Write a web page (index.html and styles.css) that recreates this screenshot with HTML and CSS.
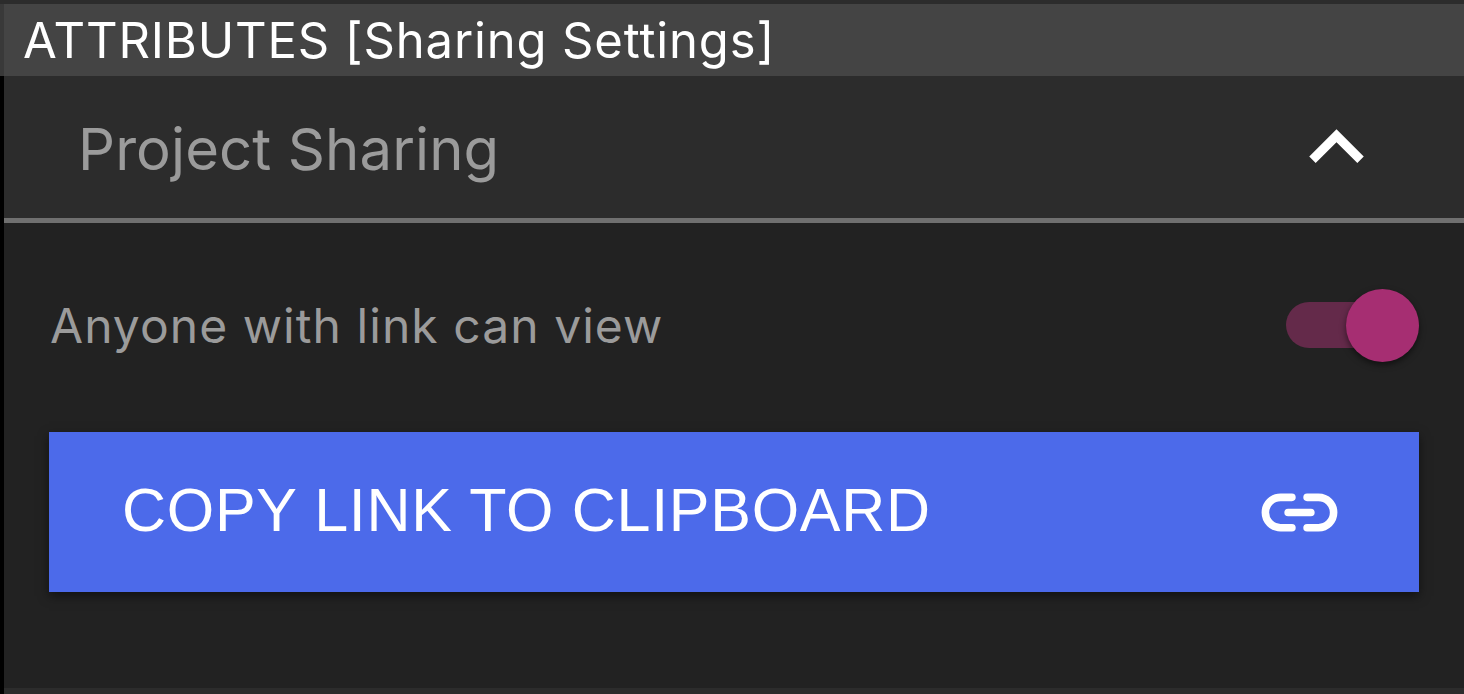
FILE: index.html
```
<!DOCTYPE html>
<html lang="en">
<head>
  <meta charset="utf-8">
  <title>Sharing Settings</title>
  <link rel="stylesheet" href="styles.css">
</head>
<body>
  <div class="panel">
    <div class="panel-title"><span class="title-text">ATTRIBUTES [Sharing Settings]</span></div>
    <div class="section">
      <div class="section-header">
        <span class="section-text">Project Sharing</span>
        <svg class="chevron" viewBox="0 0 24 24"><path d="M12 8l-6 6 1.41 1.41L12 10.83l4.59 4.58L18 14z"/></svg>
      </div>
      <div class="section-body">
        <div class="option">
          <span class="option-text">Anyone with link can view</span>
          <div class="switch"><div class="switch-knob"></div></div>
        </div>
        <button class="copy-button" type="button">
          <span class="copy-text">COPY LINK TO CLIPBOARD</span>
          <svg class="link-icon" viewBox="0 0 24 24">
            <path d="M10 8H7a4 4 0 0 0 0 8h3M14 8h3a4 4 0 0 1 0 8h-3M9 12h6"/>
          </svg>
        </button>
      </div>
    </div>
  </div>
</body>
</html>
```

FILE: styles.css
```
* {
  box-sizing: border-box;
}
body {
  margin: 0;
  background-color: #2c2c2c;
  font-family: Inter, "Liberation Sans", sans-serif;
  overflow: hidden;
}
span {
  white-space: nowrap;
}
.panel {
  height: 694px;
  padding-top: 4px;
}

/* title bar */
.panel-title {
  height: 72px;
  padding-left: 19px;
  border-left: 4px solid #393939;
  background-color: #444444;
  color: #ffffff;
  font-size: 49px;
  line-height: 73px;
}
.title-text {
  letter-spacing: 0.85px;
}

/* section */
.section {
  height: 618px;
  padding-bottom: 6px;
  border-left: 4px solid #000000;
}
.section-header {
  display: flex;
  align-items: center;
  justify-content: space-between;
  height: 147px;
  padding: 0 73px 0 74px;
  border-bottom: 5px solid #707070;
  color: #9b9b9b;
  font-size: 58px;
}
.section-text {
  padding-top: 3px;
  letter-spacing: 0.1px;
}
.chevron {
  width: 109px;
  height: 109px;
  fill: #ffffff;
}
.section-body {
  height: 465px;
  padding: 66px 45px 0;
  background-color: #222222;
}

/* switch row */
.option {
  display: flex;
  align-items: center;
  justify-content: space-between;
  height: 73px;
  color: #9b9b9b;
  font-size: 48px;
}
.option-text {
  padding-left: 1px;
  letter-spacing: 1.05px;
}
.switch {
  display: flex;
  align-items: center;
  justify-content: flex-end;
  width: 133px;
  height: 46px;
  margin-bottom: 1px;
  border-radius: 23px;
  background-color: #642a4a;
}
.switch-knob {
  width: 73px;
  height: 73px;
  flex: none;
  border-radius: 50%;
  background-color: #a62e72;
  box-shadow: 0 3px 6px rgba(0, 0, 0, 0.5);
}

/* copy button */
.copy-button {
  display: flex;
  align-items: center;
  justify-content: space-between;
  width: 100%;
  height: 160px;
  margin-top: 70px;
  padding: 0 74px 0 73px;
  border: 0;
  background-color: #4c6aea;
  box-shadow: 0 4px 10px rgba(0, 0, 0, 0.5);
  color: #ffffff;
  font-family: "Liberation Sans", Arial, sans-serif;
  font-size: 61px;
}
.copy-text {
  padding-bottom: 5px;
  letter-spacing: 0.7px;
}
.link-icon {
  width: 91px;
  height: 91px;
  fill: none;
  stroke: #ffffff;
  stroke-width: 2;
  stroke-linecap: round;
}
```
